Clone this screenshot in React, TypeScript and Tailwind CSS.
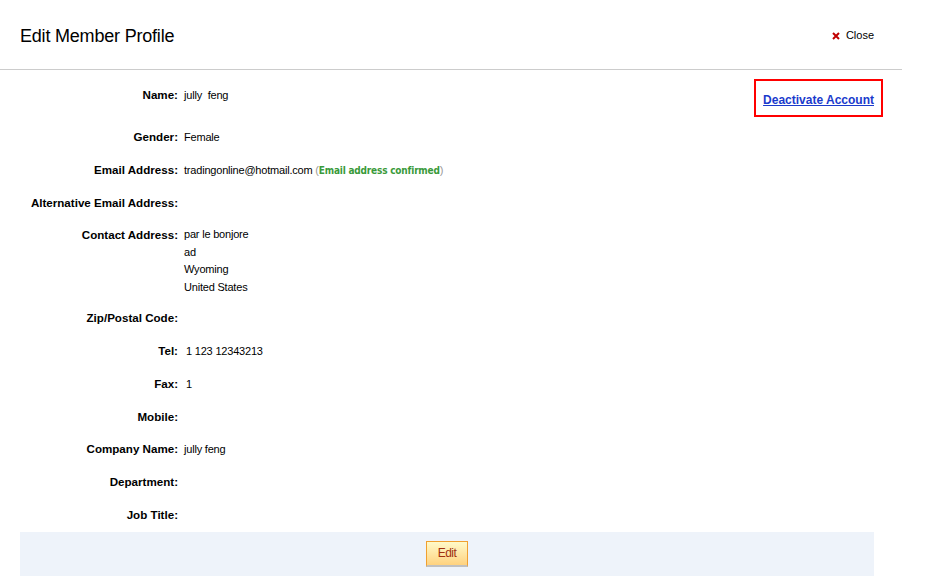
import React from "react";

const rows: { label: string; value?: React.ReactNode; cls?: string }[] = [
  { label: "Name:", value: <span>jully&nbsp; feng</span>, cls: "pb-[24px]" },
  { label: "Gender:", value: "Female" },
  {
    label: "Email Address:",
    value: (
      <span>
        tradingonline@hotmail.com{" "}
        <span className="text-[#999]">(</span>
        <span className="font-bold text-[#3a9a3a] text-[10px] leading-[10px] font-['DejaVu_Sans_Condensed','DejaVu_Sans',sans-serif]">Email address confirmed</span>
        <span className="text-[#999]">)</span>
      </span>
    ),
  },
  { label: "Alternative Email Address:", cls: "pb-[14px]" },
  {
    label: "Contact Address:",
    value: (
      <div className="flex flex-col leading-[17.7px]">
        <span>par le bonjore</span>
        <span>ad</span>
        <span>Wyoming</span>
        <span>United States</span>
      </div>
    ),
    cls: "pb-[12px]",
  },
  { label: "Zip/Postal Code:" },
  { label: "Tel:", value: <span className="pl-[2px]">1 123 12343213</span> },
  { label: "Fax:", value: <span className="pl-[2px]">1</span> },
  { label: "Mobile:", cls: "pb-[14px]" },
  { label: "Company Name:", value: "jully feng" },
  { label: "Department:" },
  { label: "Job Title:", cls: "pb-0" },
];

export default function App() {
  return (
    <div className="w-[925px] h-[582px] bg-white font-['Liberation_Sans',Arial,sans-serif] text-black overflow-hidden">
      <div className="w-[902px]">
        <div className="h-[70px] border-b border-[#cccccc] flex items-center justify-between pl-[20px] pr-[28px]">
          <h1 className="text-[18px] leading-none tracking-[-0.2px] mt-[2px]">Edit Member Profile</h1>
          <div className="flex items-center gap-[6px] text-[11px] mt-[2px]">
            <svg width="8" height="8" viewBox="0 0 8 8">
              <path d="M1 1 L7 7 M7 1 L1 7" stroke="#c00000" strokeWidth="2" />
            </svg>
            <span>Close</span>
          </div>
        </div>
        <div className="flex pt-[9px]">
          <div className="flex-1 flex flex-col pt-[7px]">
            {rows.map((r) => (
              <div key={r.label} className={`flex h-auto text-[11px] leading-[18px] ${r.cls ?? "pb-[15px]"}`}>
                <div className="w-[178px] text-right font-bold shrink-0 text-[11.6px]">{r.label}</div>
                <div className="pl-[6px] tracking-[-0.2px]">{r.value}</div>
              </div>
            ))}
          </div>
          <div className="mr-[19px] h-[38px] border-2 border-[#ff0000] flex items-center px-[7px]">
            <a href="#" className="text-[12px] font-bold text-[#1a3acc] underline mt-[4px]">
              Deactivate Account
            </a>
          </div>
        </div>
        <div className="mt-[8px] ml-[20px] w-[854px] h-[44px] bg-[#eef3fa] flex items-center justify-center">
          <button className="w-[42px] h-[26px] border border-[#f0a030] border-b-[2px] border-b-[#c0c0c0] bg-gradient-to-b from-[#fffac8] to-[#ffd27f] text-[12px] text-[#a03010] tracking-[-0.5px]">
            Edit
          </button>
        </div>
      </div>
    </div>
  );
}
